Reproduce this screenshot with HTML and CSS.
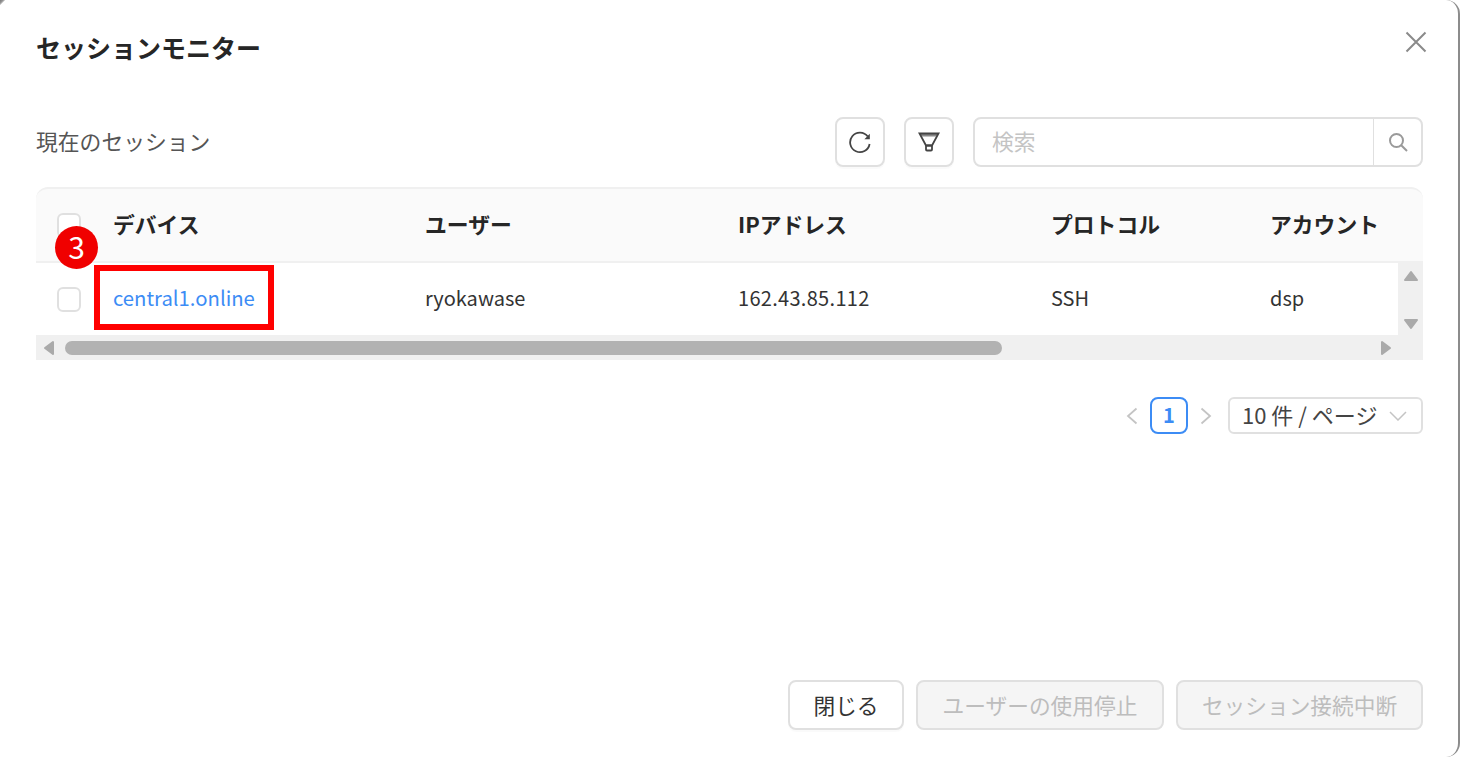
FILE: index.html
```html
<!DOCTYPE html>
<html lang="ja">
<head>
    <meta charset="UTF-8">
    <meta name="viewport" content="width=device-width, initial-scale=1.0">
    <title>セッションモニター</title>
    <link rel="stylesheet" href="styles.css">
</head>
<body>
    <div class="modal">
        <header class="modal-header">
            <h1>セッションモニター</h1>
            <button class="close-btn" aria-label="閉じる">
                <svg width="22" height="22" viewBox="0 0 22 22"><path d="M1.500 1.500l19 19M20.500 1.500l-19 19"/></svg>
            </button>
        </header>

        <div class="toolbar">
            <span class="toolbar-title">現在のセッション</span>
            <button class="icon-btn" aria-label="更新">
                <svg width="24" height="24" viewBox="0 0 24 24"><path class="line" d="M19.800 6.500A9.800 9.800 0 1 0 21.600 14"/><path class="solid" d="M21.800 3.800v5.400h-5.400z"/></svg>
            </button>
            <button class="icon-btn filter-btn" aria-label="フィルター">
                <svg width="22" height="20" viewBox="0 0 22 20"><path class="band" d="M2 2h18l-1.400 2.500H3.400z"/><path class="line" d="M1.500 1.500h19l-6.500 12H8z"/><rect class="line" x="8" y="13.500" width="6" height="5" rx="1"/></svg>
            </button>
            <div class="search">
                <span class="search-input">検索</span>
                <span class="search-btn">
                    <svg width="20" height="20" viewBox="0 0 20 20"><circle cx="8.500" cy="8.500" r="6.500"/><path d="M13.200 13.200l5.800 5.800"/></svg>
                </span>
            </div>
        </div>

        <div class="table-wrap">
            <div class="table-row table-head">
                <span class="cell-check"><span class="checkbox"></span></span>
                <span class="cell-device">デバイス</span>
                <span class="cell-user">ユーザー</span>
                <span class="cell-ip">IPアドレス</span>
                <span class="cell-protocol">プロトコル</span>
                <span class="cell-account">アカウント</span>
            </div>
            <div class="table-body">
                <div class="table-row">
                    <span class="cell-check"><span class="checkbox"></span></span>
                    <span class="cell-device"><a class="device-link">central1.online</a></span>
                    <span class="cell-user">ryokawase</span>
                    <span class="cell-ip ip-value">162.43.85.112</span>
                    <span class="cell-protocol">SSH</span>
                    <span class="cell-account">dsp</span>
                </div>
                <div class="vscroll">
                    <svg class="arrow" width="16" height="12" viewBox="0 0 16 12"><path d="M8 2L14 10H2z"/></svg>
                    <svg class="arrow" width="16" height="12" viewBox="0 0 16 12"><path d="M2 2H14L8 10z"/></svg>
                </div>
            </div>
            <div class="hscroll">
                <svg class="arrow" width="12" height="16" viewBox="0 0 12 16"><path d="M10 2V14L2 8z"/></svg>
                <span class="hscroll-track"><span class="hscroll-thumb"></span></span>
                <svg class="arrow" width="12" height="16" viewBox="0 0 12 16"><path d="M2 2V14L10 8z"/></svg>
            </div>
            <!-- annotation on top of the table -->
            <span class="step-badge">3</span>
            <span class="highlight-box"></span>
        </div>

        <div class="pagination">
            <svg class="page-arrow" width="12" height="18" viewBox="0 0 12 18"><path d="M10.500 1.500L2 9l8.500 7.500"/></svg>
            <span class="page-current">1</span>
            <svg class="page-arrow" width="12" height="18" viewBox="0 0 12 18"><path d="M1.500 1.500L10 9l-8.500 7.500"/></svg>
            <div class="page-size">
                <span class="page-size-label">10 件 / ページ</span>
                <svg width="18" height="10" viewBox="0 0 18 10"><path d="M1 1l8 8 8-8"/></svg>
            </div>
        </div>

        <footer class="modal-footer">
            <button class="btn">閉じる</button>
            <button class="btn btn-disabled btn-stop">ユーザーの使用停止</button>
            <button class="btn btn-disabled btn-cut">セッション接続中断</button>
        </footer>
    </div>
</body>
</html>
```

FILE: styles.css
```css
html, body {
    margin: 0;
    height: 100%;
    overflow: hidden;
    background-color: #ffffff;
}

body {
    font-family: "Noto Sans CJK JP", "Noto Sans", sans-serif;
    color: #333333;
}

button {
    font-family: inherit;
    padding: 0;
    background: none;
    cursor: pointer;
}

/* Modal shell */
.modal {
    position: relative;
    box-sizing: border-box;
    width: 1460px;
    height: 757px;
    padding: 0 35px 0 36px;
    background-color: #ffffff;
    border-right: 2px solid #8c8c8c;
    border-radius: 0 14px 14px 0;
    display: flex;
    flex-direction: column;
}

/* Dark sliver of the page behind the rounded top-left corner */
.modal::before {
    content: '';
    position: absolute;
    top: 0;
    left: 0;
    width: 6px;
    height: 6px;
    background: linear-gradient(135deg, #777777 0%, #999999 30%, rgba(255, 255, 255, 0) 50%);
}

.modal-header {
    display: flex;
    justify-content: space-between;
    height: 117px;
}

.modal-header h1 {
    margin: 31px 0 0;
    font-size: 25px;
    line-height: 32px;
    font-weight: 700;
    color: #262626;
}

.close-btn {
    border: 0;
    width: 22px;
    height: 22px;
    margin: 31px -4px 0 0;
}

.close-btn svg path {
    fill: none;
    stroke: #8a8a8a;
    stroke-width: 2;
}

/* Toolbar */
.toolbar {
    display: flex;
    align-items: center;
    height: 50px;
}

.toolbar-title {
    flex: 1;
    padding-bottom: 3px;
    font-size: 21.800px;
    color: #555555;
}

.icon-btn {
    box-sizing: border-box;
    width: 50px;
    height: 50px;
    border: 2px solid #e0e0e0;
    border-radius: 8px;
    display: flex;
    align-items: center;
    justify-content: center;
    box-shadow: 0 2px 0 rgba(0, 0, 0, 0.02);
}

.filter-btn {
    margin-left: 19px;
}

.line {
    fill: none;
    stroke: #444444;
    stroke-width: 1.800;
}

.solid {
    fill: #444444;
}

.band {
    fill: #888888;
}

.search {
    box-sizing: border-box;
    width: 450px;
    height: 50px;
    margin-left: 19px;
    border: 2px solid #e0e0e0;
    border-radius: 8px;
    display: flex;
}

.search-input {
    flex: 1;
    padding-left: 17px;
    font-size: 21.800px;
    line-height: 44px;
    color: #c4c4c4;
}

.search-btn {
    width: 47px;
    border-left: 1px solid #e0e0e0;
    display: flex;
    align-items: center;
    justify-content: center;
}

.search-btn svg {
    fill: none;
    stroke: #9a9a9a;
    stroke-width: 2;
}

/* Table */
.table-wrap {
    position: relative;
    margin-top: 20px;
    border-radius: 12px 12px 0 0;
    overflow: visible;
}

.table-row {
    display: flex;
    align-items: center;
    flex: 1;
    font-size: 20px;
    color: #333333;
}

.table-head {
    box-sizing: border-box;
    height: 76px;
    font-size: 21.800px;
    font-weight: 700;
    color: #262626;
    background-color: #fafafa;
    border-top: 2px solid #f0f0f0;
    border-bottom: 2px solid #f0f0f0;
    border-radius: 12px 12px 0 0;
}

.cell-check { width: 77px; padding-left: 21px; box-sizing: border-box; display: flex; }
.cell-device { width: 312px; padding-bottom: 4px; }
.cell-user { width: 313px; padding-bottom: 4px; }
.cell-ip { width: 313px; padding-bottom: 4px; }
.cell-protocol { width: 219px; padding-bottom: 4px; }
.cell-account { flex: 1; padding-bottom: 4px; }

.ip-value {
    letter-spacing: 0.300px;
}

.checkbox {
    box-sizing: border-box;
    width: 24px;
    height: 25px;
    background-color: #ffffff;
    border: 2px solid #e0e0e0;
    border-radius: 6px;
}

.device-link {
    font-size: 20.300px;
    color: #3c8cf5;
}

.table-body {
    display: flex;
    height: 72px;
}

.vscroll {
    width: 25px;
    background-color: #f0f0f0;
    display: flex;
    flex-direction: column;
    justify-content: space-between;
    align-items: center;
    padding: 7px 0 5px;
    box-sizing: border-box;
}

.hscroll {
    box-sizing: border-box;
    height: 25px;
    padding: 0 31px 0 7px;
    background-color: #f0f0f0;
    display: flex;
    align-items: center;
}

.hscroll-track {
    flex: 1;
    padding: 0 8px 0 10px;
}

.hscroll-thumb {
    display: block;
    width: 937px;
    height: 14px;
    border-radius: 7px;
    background-color: #b2b2b2;
}

.arrow {
    display: block;
    fill: #aaaaaa;
    stroke: #aaaaaa;
    stroke-width: 2;
    stroke-linejoin: round;
}

.step-badge {
    position: absolute;
    left: 19px;
    top: 39px;
    width: 43px;
    height: 43px;
    border-radius: 50%;
    background-color: #f00000;
    color: #ffffff;
    font-size: 30px;
    line-height: 41px;
    text-align: center;
}

.highlight-box {
    position: absolute;
    left: 58px;
    top: 78px;
    box-sizing: border-box;
    width: 180px;
    height: 65px;
    border: 6px solid #ff0000;
}

/* Pagination */
.pagination {
    display: flex;
    justify-content: flex-end;
    align-items: center;
    margin-top: 37px;
    height: 37px;
}

.page-arrow {
    fill: none;
    stroke: #c4c4c4;
    stroke-width: 1.800;
}

.page-current {
    box-sizing: border-box;
    width: 38px;
    height: 37px;
    margin: 0 12px;
    border: 2px solid #3c8cf5;
    border-radius: 8px;
    font-size: 20px;
    font-weight: 700;
    line-height: 32px;
    text-align: center;
    color: #3c8cf5;
}

.page-size {
    box-sizing: border-box;
    width: 195px;
    height: 37px;
    margin-left: 16px;
    padding: 0 14px 0 12px;
    border: 2px solid #e0e0e0;
    border-radius: 6px;
    display: flex;
    align-items: center;
    justify-content: space-between;
    font-size: 22px;
    color: #444444;
}

.page-size-label {
    padding-bottom: 3px;
    white-space: nowrap;
}

.page-size svg {
    fill: none;
    stroke: #c4c4c4;
    stroke-width: 1.500;
}

/* Footer */
.modal-footer {
    display: flex;
    justify-content: flex-end;
    gap: 12px;
    margin-top: auto;
    margin-bottom: 27px;
}

.btn {
    box-sizing: border-box;
    width: 116px;
    height: 50px;
    padding-bottom: 2px;
    border: 2px solid #e0e0e0;
    border-radius: 8px;
    background-color: #ffffff;
    font-size: 21.700px;
    color: #333333;
    box-shadow: 0 2px 0 rgba(0, 0, 0, 0.02);
}

.btn-disabled {
    background-color: #f5f5f5;
    color: #bdbdbd;
    box-shadow: none;
}

.btn-stop { width: 248px; }
.btn-cut { width: 247px; }
```
